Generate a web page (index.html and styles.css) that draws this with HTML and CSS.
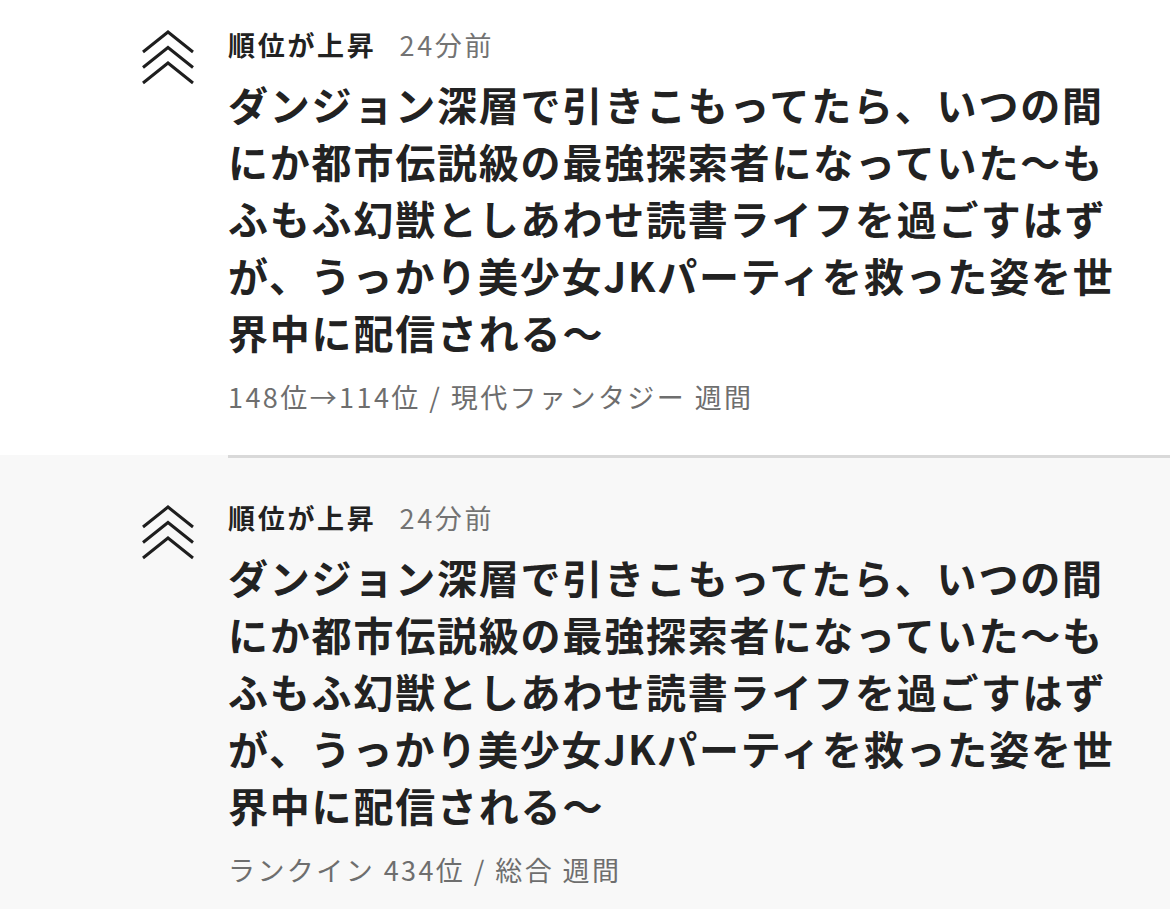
FILE: index.html
```html
<!DOCTYPE html>
<html lang="ja">
<head>
<meta charset="utf-8">
<title>ランキング</title>
<link rel="stylesheet" href="styles.css">
</head>
<body>
<ul class="feed">
  <li class="item item--first">
    <div class="item__icon">
      <svg viewBox="0 0 56 56" width="56" height="56" aria-hidden="true">
        <path d="M3 23 L28 3 L53 23" />
        <path d="M3 38.5 L28 18.5 L53 38.5" />
        <path d="M3 54 L28 34 L53 54" />
      </svg>
    </div>
    <div class="item__body">
      <div class="item__head"><span class="item__label">順位が上昇</span><span class="item__time">24分前</span></div>
      <h2 class="item__title">ダンジョン深層で引きこもってたら、いつの間にか都市伝説級の最強探索者になっていた〜もふもふ幻獣としあわせ読書ライフを過ごすはずが、うっかり美少女JKパーティを救った姿を世界中に配信される〜</h2>
      <p class="item__meta">148位→114位 / 現代ファンタジー 週間</p>
    </div>
  </li>
  <li class="item item--alt">
    <div class="item__icon">
      <svg viewBox="0 0 56 56" width="56" height="56" aria-hidden="true">
        <path d="M3 23 L28 3 L53 23" />
        <path d="M3 38.5 L28 18.5 L53 38.5" />
        <path d="M3 54 L28 34 L53 54" />
      </svg>
    </div>
    <div class="item__body">
      <div class="item__head"><span class="item__label">順位が上昇</span><span class="item__time">24分前</span></div>
      <h2 class="item__title">ダンジョン深層で引きこもってたら、いつの間にか都市伝説級の最強探索者になっていた〜もふもふ幻獣としあわせ読書ライフを過ごすはずが、うっかり美少女JKパーティを救った姿を世界中に配信される〜</h2>
      <p class="item__meta">ランクイン 434位 / 総合 週間</p>
    </div>
  </li>
</ul>
</body>
</html>
```
FILE: styles.css
```css
html, body {
  margin: 0;
  padding: 0;
  background: #ffffff;
}

body {
  font-family: "Noto Sans CJK JP", "Noto Sans", "Liberation Sans", sans-serif;
  color: #222222;
  height: 909px;
  overflow: hidden;
}

.feed {
  list-style: none;
  margin: 0;
  padding: 0;
}

.item {
  display: flex;
  padding-left: 140px;
}

.item--first {
  background: #ffffff;
}

.item--alt {
  background: #f8f8f8;
  min-height: 453px;
}

.item__icon {
  width: 56px;
  flex: none;
  padding-top: 29px;
  margin-right: 32px;
}

.item--alt .item__icon {
  padding-top: 49px;
}

.item__icon svg {
  display: block;
  fill: none;
  stroke: #1e1e1e;
  stroke-width: 3;
  stroke-linejoin: miter;
  stroke-linecap: butt;
}

.item__body {
  flex: 1;
  min-width: 0;
  padding: 26px 42px 39px 0;
}

.item--alt .item__body {
  border-top: 3px solid #d9d9d9;
  padding-top: 41px;
}

.item__head {
  display: flex;
  align-items: baseline;
  font-size: 27px;
  line-height: 38px;
  letter-spacing: 0.1em;
}

.item__label {
  font-weight: 700;
  color: #222222;
}

.item__time {
  margin-left: 23px;
  color: #737373;
  font-weight: 400;
}

.item__title {
  margin: 12px 0 0;
  font-size: 40px;
  line-height: 57px;
  font-weight: 700;
  letter-spacing: 1.8px;
  color: #222222;
}

.item__meta {
  margin: 17px 0 0;
  font-size: 27px;
  line-height: 38px;
  letter-spacing: 0.09em;
  color: #6e6e6e;
}
```
